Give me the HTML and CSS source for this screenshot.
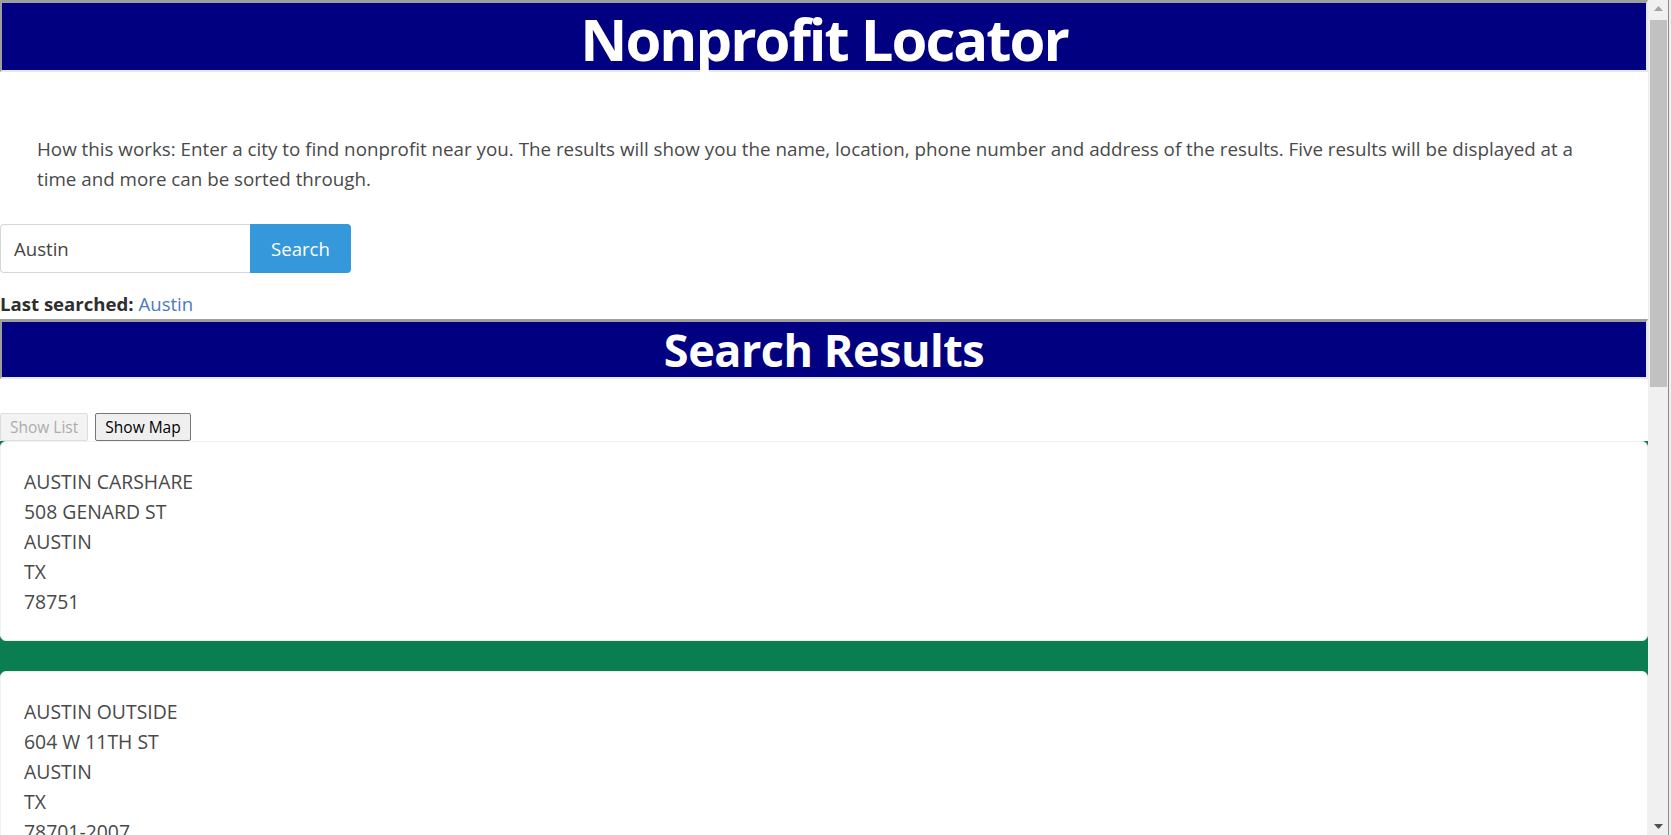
FILE: index.html
```html
<!DOCTYPE html>
<html lang="en">
<head>
<meta charset="utf-8">
<title>Nonprofit Locator</title>
<link rel="stylesheet" href="styles.css">
</head>
<body>
<div class="page">
  <h1 class="banner banner-main">Nonprofit Locator</h1>
  <p class="intro">How this works: Enter a city to find nonprofit near you. The results will show you the name, location, phone number and address of the results. Five results will be displayed at a time and more can be sorted through.</p>
  <form class="search-group">
    <input class="search-input" type="text" value="Austin">
    <button class="search-btn" type="button">Search</button>
  </form>
  <div class="last-searched"><strong class="last-label">Last searched:</strong> <a href="#" class="last-link">Austin</a></div>
  <h2 class="banner banner-results">Search Results</h2>
  <div class="view-toggle">
    <button class="toggle-btn" type="button" disabled>Show List</button>
    <button class="toggle-btn" type="button">Show Map</button>
  </div>
  <div class="results">
    <div class="result-card">
      <div class="line">AUSTIN CARSHARE</div>
      <div class="line">508 GENARD ST</div>
      <div class="line">AUSTIN</div>
      <div class="line">TX</div>
      <div class="line">78751</div>
    </div>
    <div class="result-card">
      <div class="line">AUSTIN OUTSIDE</div>
      <div class="line">604 W 11TH ST</div>
      <div class="line">AUSTIN</div>
      <div class="line">TX</div>
      <div class="line">78701-2007</div>
    </div>
    <div class="result-card">
      <div class="line">AUSTIN PETS ALIVE</div>
      <div class="line">1156 W CESAR CHAVEZ ST</div>
      <div class="line">AUSTIN</div>
      <div class="line">TX</div>
      <div class="line">78703-2646</div>
    </div>
  </div>
</div>
<div class="scrollbar">
  <div class="sb-track">
    <div class="sb-arrow">
      <svg width="9" height="5" viewBox="0 0 9 5"><path d="M0 5 L4.5 0 L9 5 Z" fill="#a3a3a3"/></svg>
    </div>
    <div class="sb-thumb"></div>
    <div class="sb-space"></div>
    <div class="sb-arrow">
      <svg width="9" height="5" viewBox="0 0 9 5"><path d="M0 0 L4.5 5 L9 0 Z" fill="#505050"/></svg>
    </div>
  </div>
  <div class="sb-edge"></div>
</div>
</body>
</html>
```

FILE: styles.css
```css
html, body {
  margin: 0;
  height: 100%;
  overflow: hidden;
}

body {
  display: flex;
  background: #ffffff;
  font-family: "Open Sans", "Noto Sans", sans-serif;
  color: #494949;
}

.page {
  flex: 1;
  min-width: 0;
}

.banner {
  margin: 0;
  background: #000080;
  color: #ffffff;
  text-align: center;
  font-weight: 700;
  border-style: solid;
  border-width: 3px 2px 2px 2px;
  border-color: #9e9e9e #e4e9e4 #e4e9e4 #9e9e9e;
}

.banner-main {
  height: 67px;
  font-size: 58px;
  line-height: 71px;
  letter-spacing: -2px;
}

.banner-results {
  height: 55px;
  font-size: 45px;
  line-height: 56px;
  letter-spacing: -0.5px;
}

.intro {
  margin: 62px 0 0;
  padding: 0 52px 0 37px;
  font-size: 18.8px;
  line-height: 30px;
}

.search-group {
  display: flex;
  margin: 30px 0 0;
  width: 351px;
  height: 49px;
}

.search-input {
  box-sizing: border-box;
  width: 250px;
  height: 49px;
  margin: 0;
  padding: 0 13px;
  border: 1px solid #d4d6d8;
  border-right: none;
  border-radius: 4px 0 0 4px;
  font-family: inherit;
  font-size: 18.6px;
  color: #444444;
  outline: none;
}

.search-btn {
  width: 101px;
  height: 49px;
  margin: 0;
  padding: 0;
  border: none;
  border-radius: 0 4px 4px 0;
  background: #3498db;
  color: #ffffff;
  font-family: inherit;
  font-size: 18.6px;
}

.last-searched {
  margin-top: 16px;
  font-size: 18.6px;
  line-height: 30px;
}

.last-label {
  color: #2e2e2e;
  font-weight: 700;
}

.last-link {
  color: #4d79c6;
  text-decoration: none;
}

.view-toggle {
  display: flex;
  gap: 7px;
  margin-top: 34px;
}

.toggle-btn {
  box-sizing: border-box;
  height: 28px;
  margin: 0;
  padding: 0 9px;
  border: 1px solid #767676;
  border-radius: 2px;
  background: #efefef;
  color: #000000;
  font-family: inherit;
  font-size: 15.5px;
  line-height: 26px;
}

.toggle-btn:disabled {
  border-color: #dedede;
  background: #f3f3f3;
  color: #acacac;
}

.results {
  background: #0a7e50;
}

.result-card {
  background: #ffffff;
  border: 1px solid #f0f2f0;
  border-radius: 6px;
  padding: 25px 23px 22.5px;
  font-size: 19.4px;
  line-height: 30px;
}

.result-card + .result-card {
  margin-top: 30px;
}

.scrollbar {
  display: flex;
  flex-shrink: 0;
  width: 23px;
  height: 100vh;
}

.sb-track {
  display: flex;
  flex-direction: column;
  width: 20px;
  background: #f0f0f0;
}

.sb-arrow {
  display: flex;
  align-items: center;
  justify-content: center;
  height: 17px;
  padding-left: 1px;
}

.sb-thumb {
  margin: 3px 1px 0 2px;
  height: 367px;
  background: #c1c1c1;
}

.sb-space {
  flex: 1;
}

.sb-edge {
  width: 3px;
  background: #f0f0f0;
  border-left: 1px solid #8a8a8a;
  box-sizing: border-box;
}
```
